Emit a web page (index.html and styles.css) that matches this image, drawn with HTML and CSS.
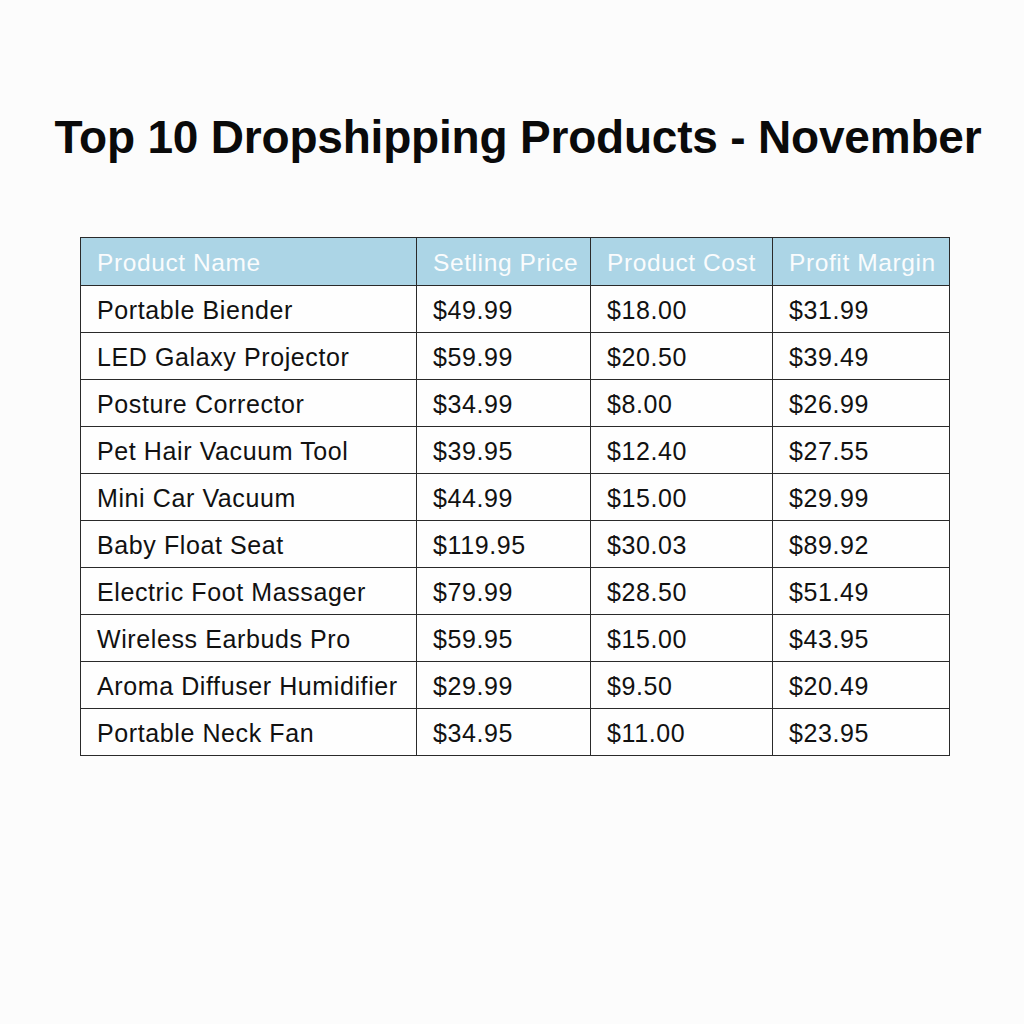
FILE: index.html
```html
<!DOCTYPE html>
<html>
<head>
<meta charset="utf-8">
<link rel="stylesheet" href="styles.css">
</head>
<body>
<main class="page">
  <h1 class="title">Top 10 Dropshipping Products - November</h1>
  <table class="products">
    <colgroup>
      <col class="c1"><col class="c2"><col class="c3"><col class="c4">
    </colgroup>
    <thead>
      <tr><th>Product Name</th><th>Setling Price</th><th>Product Cost</th><th>Profit Margin</th></tr>
    </thead>
    <tbody>
      <tr><td>Portable Biender</td><td>$49.99</td><td>$18.00</td><td>$31.99</td></tr>
      <tr><td>LED Galaxy Projector</td><td>$59.99</td><td>$20.50</td><td>$39.49</td></tr>
      <tr><td>Posture Corrector</td><td>$34.99</td><td>$8.00</td><td>$26.99</td></tr>
      <tr><td>Pet Hair Vacuum Tool</td><td>$39.95</td><td>$12.40</td><td>$27.55</td></tr>
      <tr><td>Mini Car Vacuum</td><td>$44.99</td><td>$15.00</td><td>$29.99</td></tr>
      <tr><td>Baby Float Seat</td><td>$119.95</td><td>$30.03</td><td>$89.92</td></tr>
      <tr><td>Electric Foot Massager</td><td>$79.99</td><td>$28.50</td><td>$51.49</td></tr>
      <tr><td>Wireless Earbuds Pro</td><td>$59.95</td><td>$15.00</td><td>$43.95</td></tr>
      <tr><td>Aroma Diffuser Humidifier</td><td>$29.99</td><td>$9.50</td><td>$20.49</td></tr>
      <tr><td>Portable Neck Fan</td><td>$34.95</td><td>$11.00</td><td>$23.95</td></tr>
    </tbody>
  </table>
</main>
</body>
</html>
```
FILE: styles.css
```css
html, body {
  margin: 0;
  padding: 0;
  background: #fcfcfc;
}
body {
  font-family: "Liberation Sans", Arial, sans-serif;
  color: #111;
}
.page {
  width: 1024px;
  height: 1024px;
  display: flex;
  flex-direction: column;
  align-items: center;
}
.title {
  margin: 111px 0 0 12px;
  font-size: 46px;
  font-weight: bold;
  line-height: 52px;
  color: #0a0a0a;
  letter-spacing: -0.2px;
}
.products {
  margin: 74px 0 0 6px;
  width: 869px;
  border-collapse: collapse;
  table-layout: fixed;
  border: 1.5px solid #2a2a2a;
}
.c1 { width: 336px; }
.c2 { width: 174px; }
.c3 { width: 182px; }
.c4 { width: 177px; }
.products th,
.products td {
  border: 1.5px solid #2a2a2a;
  text-align: left;
  padding: 3px 0 0 16px;
  font-size: 24.5px;
  letter-spacing: 0.6px;
  font-weight: normal;
  white-space: nowrap;
  overflow: hidden;
}
.products th {
  background: #acd5e6;
  color: #fafcfd;
  height: 44px;
}
.products td {
  background: #fefefe;
  color: #111;
  height: 43px;
  font-size: 25px;
}
```
